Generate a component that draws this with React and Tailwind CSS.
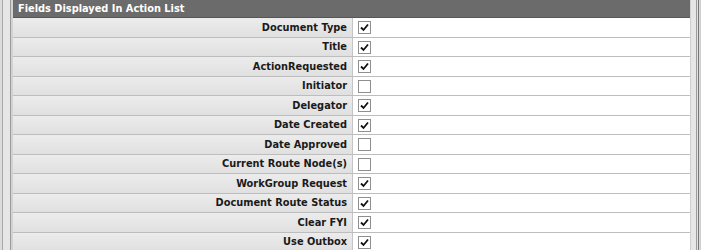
import React from 'react'

const fields = [
  { label: 'Document Type', checked: true },
  { label: 'Title', checked: true },
  { label: 'ActionRequested', checked: true },
  { label: 'Initiator', checked: false },
  { label: 'Delegator', checked: true },
  { label: 'Date Created', checked: true },
  { label: 'Date Approved', checked: false },
  { label: 'Current Route Node(s)', checked: false },
  { label: 'WorkGroup Request', checked: true },
  { label: 'Document Route Status', checked: true },
  { label: 'Clear FYI', checked: true },
  { label: 'Use Outbox', checked: true },
]

const Box = ({ checked }) => (
  <span className="flex h-[13px] w-[13px] items-center justify-center border border-[#8f8f8f] bg-white">
    {checked && (
      <svg width="9" height="9" viewBox="0 0 9 9">
        <path d="M1 4.5 L3.5 7 L8 1.5" fill="none" stroke="#111" strokeWidth="1.8" />
      </svg>
    )}
  </span>
)

const FieldRow = ({ label, checked }) => (
  <div className="flex h-[19.5px] shrink-0 border-b border-[#bdbdbd]">
    <div className="flex w-[339px] items-center justify-end bg-gradient-to-b from-[#ececec] to-[#e0e0e0] pr-[5px] pt-[2px] text-[9.8px] font-bold text-[#1a1a1a]">
      {label}
    </div>
    <div className="w-px bg-[#c4c4c4]" />
    <div className="flex flex-1 items-center bg-white pl-[5px] pt-[1px]">
      <Box checked={checked} />
    </div>
  </div>
)

export default function App() {
  return (
    <div className="flex h-[250px] w-[701px] overflow-hidden bg-[#e4e4e4]" style={{ fontFamily: '"DejaVu Sans", Verdana, sans-serif' }}>
      <div className="flex w-[13px] shrink-0">
        <div className="w-[2px] bg-[#dcdcdc]" />
        <div className="w-px bg-[#a8a8a8]" />
        <div className="w-[7px] bg-[#e6e6e6]" />
        <div className="w-px bg-[#9a9a9a]" />
        <div className="w-[2px] bg-[#d2d2d2]" />
      </div>
      <div className="flex w-[677px] flex-col">
        <div className="flex h-[18px] shrink-0 items-center border-b border-[#555] bg-[#6b6b6b] pl-[5px] pt-[2px] text-[9.8px] font-bold text-white">
          Fields Displayed In Action List
        </div>
        {fields.map((f) => (
          <FieldRow key={f.label} label={f.label} checked={f.checked} />
        ))}
      </div>
      <div className="flex flex-1">
        <div className="w-px bg-[#cfcfcf]" />
        <div className="w-[5px] bg-[#e6e6e6]" />
        <div className="w-px bg-[#9c9c9c]" />
        <div className="w-px bg-[#e2e2e2]" />
        <div className="w-px bg-[#777]" />
        <div className="w-px bg-[#d8d8d8]" />
        <div className="flex-1 bg-[#cfcfcf]" />
      </div>
    </div>
  )
}
